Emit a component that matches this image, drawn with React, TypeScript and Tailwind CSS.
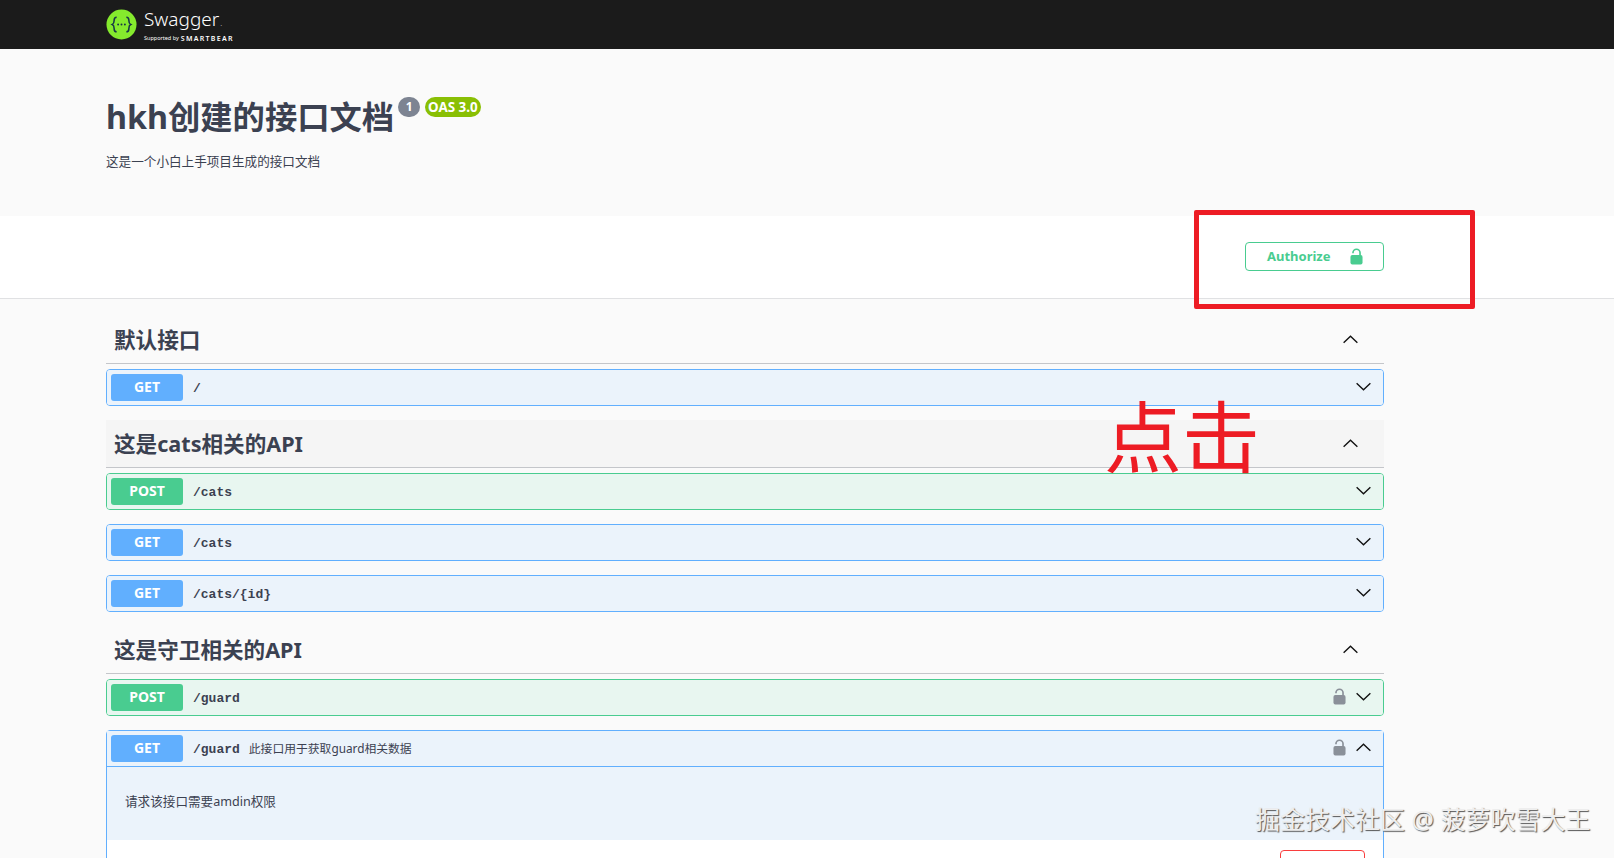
const sans = "font-['Noto_Sans','Noto_Sans_CJK_SC',sans-serif]";

function Chevron({ up = false, className = '' }: { up?: boolean; className?: string }) {
  return (
    <svg viewBox="0 0 18 12" className={`w-[17px] h-[11px] ${className}`} fill="none" stroke="#111" strokeWidth="1.5">
      <path d={up ? 'M1.5 9.5 9 2.5l7.5 7' : 'M1.5 2.5 9 9.5l7.5-7'} />
    </svg>
  );
}

function Lock({ color, className = '' }: { color: string; className?: string }) {
  return (
    <svg viewBox="0 0 14 18" className={`w-[13px] h-[17px] ${className}`}>
      <path d="M3.2 5.5V5a3.8 3.8 0 0 1 7.6 0v3" fill="none" stroke={color} strokeWidth="1.8" />
      <rect x="0.5" y="7.5" width="13" height="10" rx="2" fill={color} />
    </svg>
  );
}

function Logo() {
  return (
    <svg viewBox="0 0 32 32" className="w-[31px] h-[31px]">
      <circle cx="16" cy="16" r="15.5" fill="#85ea2d" />
      <path d="M11 8.5c-2.5 0-2.6 1.4-2.6 3.2 0 2 .1 3.4-1.9 4.3 2 .9 1.9 2.3 1.9 4.3 0 1.8.1 3.2 2.6 3.2M21 8.5c2.5 0 2.6 1.4 2.6 3.2 0 2-.1 3.4 1.9 4.3-2 .9-1.9 2.3-1.9 4.3 0 1.8-.1 3.2-2.6 3.2" fill="none" stroke="#173647" strokeWidth="1.6" />
      <circle cx="12.5" cy="16" r="1" fill="#173647" />
      <circle cx="16" cy="16" r="1" fill="#173647" />
      <circle cx="19.5" cy="16" r="1" fill="#173647" />
    </svg>
  );
}

function Op({ method, path, desc, locked, open }: { method: 'GET' | 'POST'; path: string; desc?: string; locked?: boolean; open?: boolean }) {
  const get = method === 'GET';
  return (
    <div className={`h-[35px] flex items-center pl-[4px] pr-[11px] ${get ? 'bg-[#ebf3fb]' : 'bg-[#e8f6f0]'}`}>
      <div className={`w-[72px] h-[27px] pb-[2px] rounded-[3px] flex items-center justify-center text-white font-bold text-[14px] ${get ? 'bg-[#61affe]' : 'bg-[#49cc90]'}`}>
        {method}
      </div>
      <div className="ml-[10px] pt-[2px] font-['Liberation_Mono',monospace] font-bold text-[13px] text-[#3b4151]">{path}</div>
      {desc && <div className="ml-[9px] text-[11.8px] text-[#3b4151]">{desc}</div>}
      <div className="ml-auto flex items-center gap-[9px] pb-[2px]">
        {locked && <Lock color="#8a9099" />}
        <Chevron up={open} />
      </div>
    </div>
  );
}

function OpBox({ method, path, top = 'mt-[14px]' }: { method: 'GET' | 'POST'; path: string; top?: string }) {
  const border = method === 'GET' ? 'border-[#61affe]' : 'border-[#49cc90]';
  return (
    <div className={`${top} border ${border} rounded-[4px] overflow-hidden`}>
      <Op method={method} path={path} locked={path === '/guard'} />
    </div>
  );
}

function Tag({ title, shaded }: { title: string; shaded?: boolean }) {
  return (
    <div className={`h-[48px] flex items-center justify-between pl-[8px] pr-[25px] border-b border-[#c4c6ca] ${shaded ? 'bg-[#f5f5f5]' : ''}`}>
      <h3 className="pt-[2px] text-[21.6px] font-bold text-[#3b4151]">{title}</h3>
      <Chevron up />
    </div>
  );
}

export default function App() {
  return (
    <div className={`relative h-[858px] overflow-hidden bg-[#fafafa] ${sans}`}>
      {/* top bar */}
      <div className="h-[49px] bg-[#1b1b1b] pl-[106px] flex items-center">
        <Logo />
        <div className="ml-[7px] text-white">
          <div className="text-[19px] leading-[22px] mt-[1px] font-light">Swagger<span className="text-[8px] ml-[1px]">.</span></div>
          <div className="text-[5.5px] leading-[9px] flex items-center gap-[2px]">
            Supported by <span className="text-[7px] font-semibold tracking-[1.3px]">SMARTBEAR</span>
          </div>
        </div>
      </div>

      {/* api info */}
      <div className="h-[167px] pl-[106px] pt-[44px]">
        <div className="flex items-start">
          <h1 className="text-[32.3px] leading-[46px] font-bold text-[#3b4151]">hkh创建的接口文档</h1>
          <span className="ml-[4px] mt-[4px] w-[22px] h-[20px] rounded-full bg-[#7d8492] text-white text-[12px] font-bold flex items-center justify-center">1</span>
          <span className="ml-[5px] mt-[4px] h-[20px] px-[3px] rounded-[10px] bg-[#89bf04] text-white text-[13.4px] font-bold flex items-center">OAS 3.0</span>
        </div>
        <p className="mt-[14px] text-[12.6px] text-[#3b4151]">这是一个小白上手项目生成的接口文档</p>
      </div>

      {/* schemes */}
      <div className="h-[83px] bg-white border-b border-[#e0e1e3] pt-[26px] pl-[1245px]">
        <div className="w-[139px] h-[29px] border border-[#49cc90] rounded-[4px] flex items-center pl-[21px] pr-[20px] justify-between">
          <span className="pt-[1px] text-[13px] font-bold text-[#49cc90]">Authorize</span>
          <Lock color="#49cc90" />
        </div>
      </div>

      {/* operations */}
      <div className="ml-[106px] w-[1278px] pt-[17px]">
        <Tag title="默认接口" />
        <OpBox method="GET" path="/" top="mt-[5px]" />

        <div className="mt-[14px]">
          <Tag title="这是cats相关的API" shaded />
        </div>
        <OpBox method="POST" path="/cats" top="mt-[5px]" />
        <OpBox method="GET" path="/cats" />
        <OpBox method="GET" path="/cats/{id}" />

        <div className="mt-[14px]">
          <Tag title="这是守卫相关的API" />
        </div>
        <OpBox method="POST" path="/guard" top="mt-[5px]" />

        <div className="mt-[14px] border border-[#61affe] rounded-t-[4px] h-[300px] bg-white">
          <div className="border-b border-[#61affe]">
            <Op method="GET" path="/guard" desc="此接口用于获取guard相关数据" locked open />
          </div>
          <div className="h-[73px] bg-[#ebf3fb] pl-[18px] pt-[26px] text-[12.6px] text-[#3b4151]">请求该接口需要amdin权限</div>
          <div className="flex justify-end pr-[18px] pt-[10px]">
            <div className="w-[85px] h-[30px] border border-[#f93e3e] rounded-[4px]" />
          </div>
        </div>
      </div>

      {/* annotations on top of the screenshot */}
      <div className="absolute left-[1194px] top-[210px] w-[281px] h-[99px] border-[5px] border-[#ed1c24] rounded-[2px]" />
      <div className="absolute left-[1104px] top-[387px] text-[78px] leading-[100px] text-[#ed1c24]">点击</div>
      <div className="absolute left-[1255px] top-[801px] text-[25px] leading-[36px] text-[#eeeeee] [text-shadow:1px_1px_1px_#555]">掘金技术社区 @ 菠萝吹雪大王</div>
    </div>
  );
}
